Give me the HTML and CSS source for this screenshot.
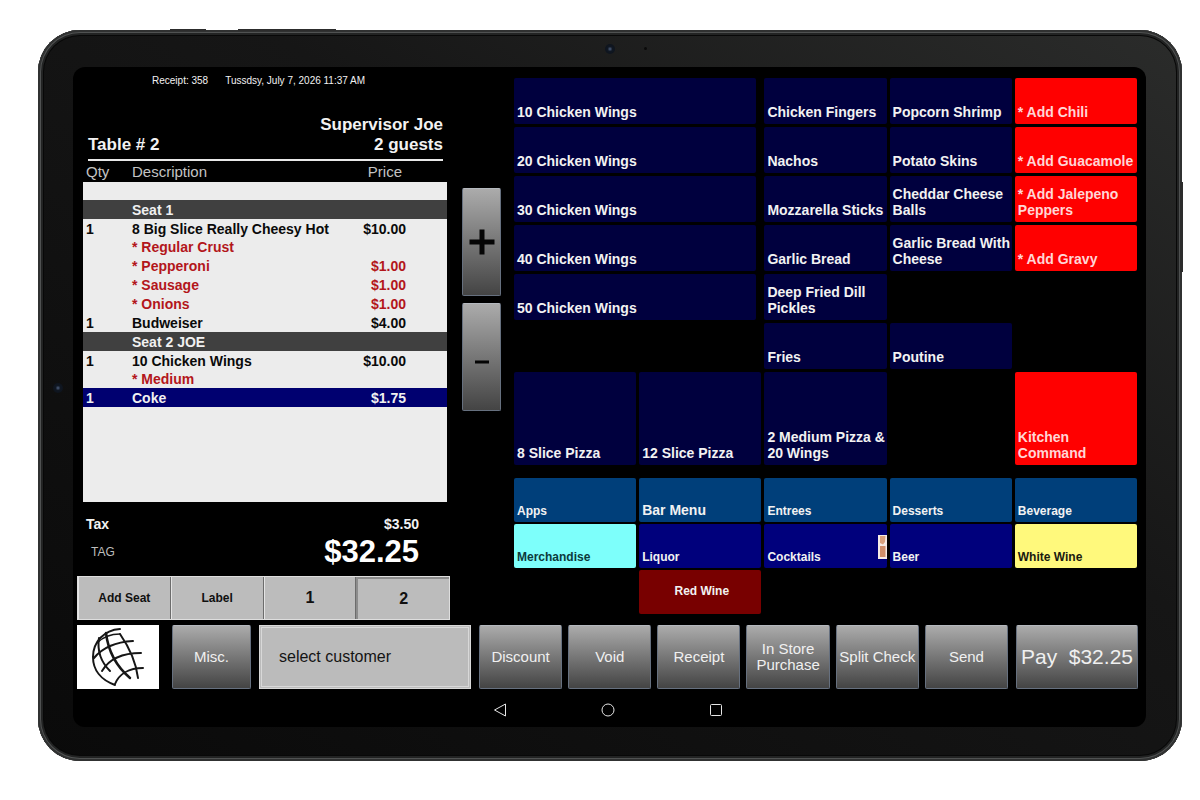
FILE: index.html
```html
<!DOCTYPE html>
<html lang="en">
<head>
    <meta charset="UTF-8">
    <meta name="viewport" content="width=device-width, initial-scale=1.0">
    <title>Table 2 - Order</title>
    <link rel="stylesheet" href="styles.css">
</head>
<body>
    <div class="tablet">
        <span class="key key-power"></span>
        <span class="key key-volume"></span>
        <span class="key key-side"></span>
        <span class="camera camera-top"></span>
        <span class="sensor"></span>
        <span class="camera camera-left"></span>

        <div class="screen">
            <main class="order">
                <section class="ticket">
                    <p class="receipt-info"><span>Receipt: 358</span><span>Tussdsy, July 7, 2026 11:37 AM</span></p>
                    <header class="table-info">
                        <strong>Table # 2</strong>
                        <div class="server">Supervisor Joe<br>2 guests</div>
                    </header>
                    <div class="list">
                        <table>
                            <thead>
                                <tr><th class="qty">Qty</th><th>Description</th><th class="price">Price</th></tr>
                            </thead>
                            <tbody>
                                <tr class="short"><td></td><td></td><td></td></tr>
                                <tr class="seat"><td></td><td>Seat 1</td><td></td></tr>
                                <tr><td>1</td><td>8 Big Slice Really Cheesy Hot</td><td class="price">$10.00</td></tr>
                                <tr class="modifier short"><td></td><td>* Regular Crust</td><td></td></tr>
                                <tr class="modifier"><td></td><td>* Pepperoni</td><td class="price">$1.00</td></tr>
                                <tr class="modifier"><td></td><td>* Sausage</td><td class="price">$1.00</td></tr>
                                <tr class="modifier"><td></td><td>* Onions</td><td class="price">$1.00</td></tr>
                                <tr><td>1</td><td>Budweiser</td><td class="price">$4.00</td></tr>
                                <tr class="seat"><td></td><td>Seat 2 JOE</td><td></td></tr>
                                <tr><td>1</td><td>10 Chicken Wings</td><td class="price">$10.00</td></tr>
                                <tr class="modifier short"><td></td><td>* Medium</td><td></td></tr>
                                <tr class="selected"><td>1</td><td>Coke</td><td class="price">$1.75</td></tr>
                            </tbody>
                        </table>
                    </div>
                    <div class="totals">
                        <div class="total-row tax"><span>Tax</span><span>$3.50</span></div>
                        <div class="total-row"><span class="tag">TAG</span><span class="total">$32.25</span></div>
                    </div>
                    <div class="seats">
                        <button>Add Seat</button>
                        <button>Label</button>
                        <button class="number">1</button>
                        <button class="number active">2</button>
                    </div>
                </section>

                <div class="steps">
                    <button class="metal" aria-label="Increase quantity">
                        <svg width="26" height="26" viewBox="0 0 26 26"><path d="M13 0.5v25M0.5 13h25" stroke="#050505" stroke-width="5"/></svg>
                    </button>
                    <button class="metal" aria-label="Decrease quantity">
                        <svg width="26" height="26" viewBox="0 0 26 26"><path d="M6 18h14" stroke="#050505" stroke-width="3"/></svg>
                    </button>
                </div>

                <section class="menu">
                    <div class="items">
                        <button class="wide">10 Chicken Wings</button>
                        <button>Chicken Fingers</button>
                        <button>Popcorn Shrimp</button>
                        <button class="red">* Add Chili</button>

                        <button class="wide">20 Chicken Wings</button>
                        <button>Nachos</button>
                        <button>Potato Skins</button>
                        <button class="red">* Add Guacamole</button>

                        <button class="wide">30 Chicken Wings</button>
                        <button>Mozzarella Sticks</button>
                        <button>Cheddar Cheese Balls</button>
                        <button class="red">* Add Jalepeno Peppers</button>

                        <button class="wide">40 Chicken Wings</button>
                        <button>Garlic Bread</button>
                        <button>Garlic Bread With Cheese</button>
                        <button class="red">* Add Gravy</button>

                        <button class="wide">50 Chicken Wings</button>
                        <button>Deep Fried Dill Pickles</button>
                        <span class="wide"></span>

                        <span class="wide"></span>
                        <button>Fries</button>
                        <button>Poutine</button>
                        <span></span>

                        <button>8 Slice Pizza</button>
                        <button>12 Slice Pizza</button>
                        <button>2 Medium Pizza &amp; 20 Wings</button>
                        <span></span>
                        <button class="red">Kitchen Command</button>
                    </div>
                    <div class="categories">
                        <button>Apps</button>
                        <button class="large">Bar Menu</button>
                        <button>Entrees</button>
                        <button>Desserts</button>
                        <button>Beverage</button>
                        <button class="cyan">Merchandise</button>
                        <button class="navy">Liquor</button>
                        <button class="navy">Cocktails
                            <svg class="thumb" width="9" height="24" viewBox="0 0 9 24"><path d="M0 0h9v24H0z" fill="#f6ece4"/><path d="M2 1h5.500l-.5 6-2 2.500L2 8z" fill="#d9a27c"/><path d="M2 11h5.500v11H2z" fill="#d08f68"/></svg>
                        </button>
                        <button class="navy">Beer</button>
                        <button class="yellow">White Wine</button>
                        <span></span>
                        <button class="wine">Red Wine</button>
                    </div>
                </section>
            </main>

            <div class="bar">
                <button class="logo" aria-label="Home">
                    <svg width="80" height="62" viewBox="0 0 80 62" fill="none" stroke="#161616" stroke-linecap="round">
                        <path d="M43 3C27 4 16 16 16 31c0 13 8 23 22 28" stroke-width="2"/>
                        <path d="M20 17c6-6 13-9 23-9" stroke-width="1.500"/>
                        <path d="M17 32c9-11 21-16 39-17" stroke-width="2"/>
                        <path d="M25 45c7-12 19-18 39-18" stroke-width="2"/>
                        <path d="M38 58c4-10 14-16 28-16" stroke-width="2"/>
                        <path d="M29 7c2 17 10 33 24 45" stroke-width="2.500"/>
                        <path d="M22 12c-2 13 2 24 11 33" stroke-width="2"/>
                        <path d="M43 8c9 13 16 28 18 44" stroke-width="2"/>
                    </svg>
                </button>
                <button class="metal">Misc.</button>
                <button class="customer">select customer</button>
                <div class="actions">
                    <button class="metal">Discount</button>
                    <button class="metal">Void</button>
                    <button class="metal">Receipt</button>
                    <button class="metal">In Store Purchase</button>
                    <button class="metal">Split Check</button>
                    <button class="metal">Send</button>
                </div>
                <button class="metal pay"><span>Pay</span><span>$32.25</span></button>
            </div>

            <nav class="system">
                <button aria-label="Back"><svg width="14" height="14" viewBox="0 0 14 14"><path d="M1.500 7L12.500 1v12z"/></svg></button>
                <button aria-label="Home screen"><svg width="14" height="14" viewBox="0 0 14 14"><circle cx="7" cy="7" r="6"/></svg></button>
                <button aria-label="Recent apps"><svg width="14" height="14" viewBox="0 0 14 14"><rect x="1.500" y="1.500" width="11" height="11" rx="1"/></svg></button>
            </nav>
        </div>
    </div>
</body>
</html>
```
FILE: styles.css
```css
* {
    box-sizing: border-box;
}
body {
    margin: 0;
    padding: 30px 18px 38px 38px;
    background-color: white;
    font-family: "Liberation Sans", Arial, sans-serif;
    color: #f2f2f2;
}
button {
    margin: 0;
    padding: 0;
    border: none;
    font-family: inherit;
    color: inherit;
    cursor: pointer;
}

/* Tablet body */
.tablet {
    position: relative;
    padding: 37px 36px 34px 35px;
    border-radius: 42px;
    background: linear-gradient(to bottom left, #2b2c2b, #161616 40%, #0a0a0a);
    box-shadow: inset 0 0 0 2px #303131, inset 0 0 0 3px #505252, inset 0 0 0 5px #222323, inset 0 0 0 6px #080808;
}
.key {
    position: absolute;
    background-color: #2c2c2c;
}
.key-power {
    top: -1px;
    left: 132px;
    width: 36px;
    height: 2px;
}
.key-volume {
    top: -1px;
    left: 200px;
    width: 98px;
    height: 2px;
}
.key-side {
    top: 152px;
    right: -1px;
    width: 3px;
    height: 90px;
}
.camera {
    position: absolute;
    width: 10px;
    height: 10px;
    border-radius: 50%;
    background: radial-gradient(#3c4a63 10%, #101722 35%, #0c1119);
}
.camera-top {
    top: 14px;
    left: 50%;
    margin-left: -5px;
}
.camera-left {
    top: 353px;
    left: 15px;
}
.sensor {
    position: absolute;
    top: 17px;
    left: 53%;
    width: 3px;
    height: 3px;
    border-radius: 50%;
    background-color: #0a0a0a;
}
.screen {
    padding: 0 8px 0 4px;
    border-radius: 12px;
    background-color: black;
}
.order {
    display: flex;
    padding: 0 1px 5px 0;
}

/* Ticket */
.ticket {
    flex: 373 1 0;
    display: flex;
    flex-direction: column;
}
.receipt-info {
    display: flex;
    gap: 17px;
    margin: 8px 0 28px 75px;
    font-size: 10px;
    line-height: 12px;
}
.table-info {
    display: flex;
    justify-content: space-between;
    align-items: flex-end;
    margin: 0 7px 0 11px;
    padding-bottom: 4px;
    border-bottom: 2px solid #e8e8e8;
    font-size: 17px;
    line-height: 20px;
    font-weight: bold;
}
.server {
    text-align: right;
}
.list {
    height: 341px;
    margin: 0 3px 0 6px;
    background: linear-gradient(black 21px, #ececec 21px);
}
table {
    width: 100%;
    border-collapse: collapse;
    font-size: 14px;
    font-weight: bold;
    color: #0a0a0a;
}
th {
    height: 21px;
    padding: 0;
    font-size: 15px;
    font-weight: normal;
    line-height: 21px;
    text-align: left;
    color: #c4c4c4;
}
td {
    height: 19px;
    padding: 0;
    line-height: 18px;
}
.short td {
    height: 18px;
}
th.qty {
    width: 49px;
}
th:first-child, td:first-child {
    padding-left: 3px;
}
.price {
    padding-right: 41px;
    text-align: right;
}
th.price {
    padding-right: 45px;
}
.seat {
    background-color: #404040;
    color: #f0f0f0;
}
.modifier {
    color: #b3161b;
}
.selected {
    background-color: #000070;
    color: #f0f0f0;
}
.totals {
    padding: 13px 31px 6px 9px;
}
.total-row {
    display: flex;
    justify-content: space-between;
    align-items: center;
}
.tax {
    font-size: 14px;
    line-height: 19px;
    font-weight: bold;
}
.tag {
    padding-left: 5px;
    font-size: 12px;
    color: #bdbdbd;
}
.total {
    font-size: 31px;
    line-height: 36px;
    font-weight: bold;
    color: white;
}
.seats {
    display: flex;
    border: 1px solid #dedede;
}
.seats button {
    flex: 1;
    height: 42px;
    border-left: 1px solid #e4e4e4;
    border-right: 1px solid #6c6c6c;
    background-color: #bcbcbc;
    font-size: 12px;
    font-weight: bold;
    color: #101010;
}
.seats .number {
    font-size: 16px;
}
.seats .active {
    border: 2px solid #8c8c8c;
    border-width: 2px 0 0 2px;
}

/* Grey gradient buttons */
.metal {
    border: 1px solid #66707f;
    border-top-color: #b4b8be;
    border-radius: 2px;
    background: linear-gradient(#ababab, #777 50%, #444);
    font-size: 15px;
    line-height: 16px;
    color: #f0f0f0;
}
.steps {
    display: flex;
    flex-direction: column;
    gap: 7px;
    width: 39px;
    margin: 121px 13px 0 12px;
}
.steps .metal {
    height: 108px;
}
.steps svg {
    display: block;
    margin: auto;
}

/* Menu */
.menu {
    flex: 623 1 0;
    padding-top: 11px;
}
.items, .categories {
    display: grid;
    grid-template-columns: repeat(5, 1fr);
    gap: 3px;
}
.items {
    grid-template-rows: repeat(6, 46px) 93px;
    margin-bottom: 13px;
}
.categories {
    grid-auto-rows: 44px;
    row-gap: 2px;
}
.items button, .categories button {
    display: flex;
    align-items: flex-end;
    padding: 0 0 4px 3px;
    border-radius: 2px;
    background-color: #00003e;
    font-size: 14px;
    line-height: 16px;
    font-weight: bold;
    text-align: left;
}
.wide {
    grid-column: span 2;
    margin-right: 5px;
}
.items .red {
    background-color: #ff0000;
    color: #ffd6d6;
}
.categories button {
    position: relative;
    padding-bottom: 3px;
    background-color: #003f7a;
    font-size: 12px;
}
.categories .large {
    padding-bottom: 4px;
    font-size: 14px;
}
.categories .cyan {
    background-color: #7dfffb;
    color: #0c3a3c;
}
.categories .navy {
    background-color: #00007c;
}
.categories .yellow {
    background-color: #fff97c;
    color: #1a1a10;
}
.categories .wine {
    align-items: center;
    justify-content: center;
    background-color: #780000;
}
.thumb {
    position: absolute;
    top: 11px;
    right: 0;
}

/* Bottom bar */
.bar {
    display: grid;
    grid-template-columns: 87fr 79fr 212fr 529fr 122fr;
    gap: 8px;
    height: 64px;
}
.logo {
    margin-right: 5px;
    background-color: white;
}
.logo svg {
    display: block;
}
.customer {
    padding-left: 17px;
    border: 3px double #d8d8d8;
    background-color: #bbb;
    font-size: 16px;
    text-align: left;
    color: #141414;
}
.actions {
    display: grid;
    grid-template-columns: repeat(6, 1fr);
    gap: 6px;
}
.pay {
    display: flex;
    justify-content: space-between;
    align-items: center;
    padding: 0 4px;
    font-size: 21px;
}

/* Android navigation */
.system {
    display: flex;
    justify-content: center;
    gap: 94px;
    padding: 14px 0 10px;
}
.system button {
    height: 14px;
    background: none;
}
.system svg {
    display: block;
    fill: none;
    stroke: #e6e6e6;
}
```
